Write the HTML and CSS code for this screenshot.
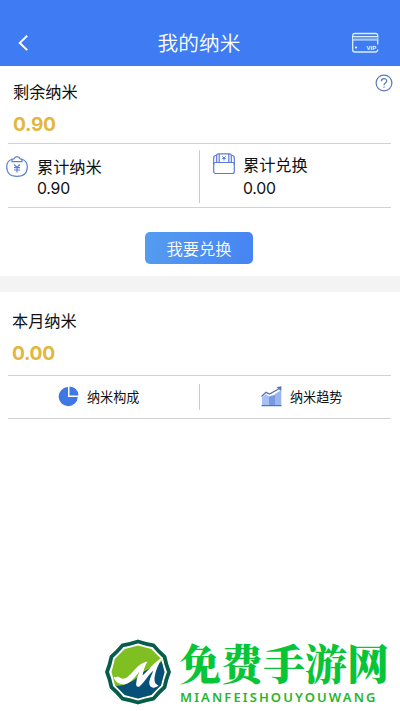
FILE: index.html
```html
<!DOCTYPE html>
<html lang="zh-CN">
<head>
<meta charset="utf-8">
<meta name="viewport" content="width=device-width, initial-scale=1">
<title>我的纳米</title>
<link rel="stylesheet" href="styles.css">
</head>
<body>
<header class="bar">
  <svg class="back" viewBox="0 0 12 18"><path d="M10.200 1.700 2.800 8.900l7.400 7.200" fill="none" stroke="#fff" stroke-width="2"/></svg>
  <h1 class="title">我的纳米</h1>
  <svg class="vip" viewBox="0 0 28 22"><path d="M17 20H4Q1.700 20 1.700 18V3.500Q1.700 1.500 4 1.500h20.500q2.200 0 2.200 2v9M26.700 17.500q0 2.500-2.500 2.500h-7.500" fill="none" stroke="#d9f0ff" stroke-width="1.300"/><path d="M2 4.500h24.500v3.500H2z" fill="#6d9fe8"/><path d="M2 4.500h24.500M2 8h24.500" stroke="#d9f0ff"/><circle cx="5" cy="15.500" r="1.100" fill="#fff"/><text x="15.500" y="18" class="vip-text">VIP</text></svg>
</header>
<main>
  <section class="balance">
    <div class="summary">
      <div><h2 class="label">剩余纳米</h2><p class="amount">0.90</p></div>
      <svg class="help" viewBox="0 0 18 18"><circle cx="9" cy="9" r="7.900" fill="none" stroke="#5879b8" stroke-width="1.200"/><path d="M6.300 7.200C6.300 3.700 11.700 3.700 11.700 7c0 2-2.700 2.100-2.700 4.200M9 12.500v1.300" fill="none" stroke="#5879b8" stroke-width="1.200"/></svg>
    </div>
    <div class="stats">
      <div class="stat">
        <svg class="stat-icon purse" viewBox="0 0 22 22"><g fill="none" stroke="#5b7fd0" stroke-width="1.200"><path d="M6 3.300C2.500 4.500.7 7.200.7 10.700c0 6.200 3.500 9.600 10.300 9.600s10.300-3.400 10.300-9.600c0-3.500-1.800-6.200-5.300-7.400"/><path d="M6 5.700V3.300l2-.5C9-.1 13-.1 14 2.800l2 .5v2.400Z"/><path d="m8 8.500 3 3 3-3M11 11.500v5M8 11.700h6M8 14h6"/></g></svg>
        <div><h3 class="label">累计纳米</h3><p class="value">0.90</p></div>
      </div>
      <div class="stat exchange">
        <svg class="stat-icon" viewBox="0 0 22 22"><g fill="none" stroke="#5b7bdc" stroke-width="1.200"><rect x=".7" y="9.500" width="20.600" height="11" rx="2"/><path d="M.7 11.500V5q0-2.500 2.300-2.500h1M21.300 11.500V5q0-2.500-2.300-2.500h-1M3.700 9.500V2.500Q3.700.8 5.500.8h11q1.800 0 1.800 1.700v7M6.200 1v8.500M15.800 1v8.500"/><path d="m9.300 3.300 1.700 1.700 1.700-1.700M11 5v2.700M9.300 5.500h3.400" stroke-width="1"/></g></svg>
        <div><h3 class="label">累计兑换</h3><p class="value">0.00</p></div>
      </div>
    </div>
    <button class="redeem">我要兑换</button>
  </section>
  <section class="month">
    <h2 class="label">本月纳米</h2><p class="amount">0.00</p>
    <nav class="links">
      <a class="link"><svg class="link-icon" viewBox="0 0 21 21"><path d="M10 1A9.600 9.600 0 1 0 19.800 11H10Z" fill="#3f78e6"/><path d="M11.500.4V9.400h9A9.200 9.200 0 0 0 11.500.4Z" fill="#3f78e6"/></svg>纳米构成</a>
      <a class="link trend"><svg class="link-icon" viewBox="0 0 21 21"><path d="M1 11.500 5 8.200l3 2v9H1z" fill="#a6bff5"/><path d="M8 10.500l6-1.700v10.400H8z" fill="#7799e2"/><path d="m14 8 6.300-4v15.200H14z" fill="#9bb5f2"/><path d="M.5 19.700h20M.5 10.500 5 6.300l3.500 1.800L18 2.800" fill="none" stroke="#5572b4" stroke-width="1.300"/><path d="m15.500 1.200 5-.9-.3 4.700Z" fill="#5572b4"/></svg>纳米趋势</a>
    </nav>
  </section>
</main>
<footer class="brand">
  <svg class="logo" viewBox="0 0 68 66">
    <defs><clipPath id="badge"><path d="m34 6.500 13.300 3.500 9.700 9.700L60.500 33 57 46.300 47.300 56 34 59.500 20.700 56 11 46.300 7.500 33 11 19.700 20.700 10Z"/></clipPath></defs>
    <path d="M34 2.500Q41.500 5 49.500 6.400 54.500 12.500 60.500 17.700 62 25.500 65 33 62 40.500 60.500 48.300 54.500 53.500 49.500 59.600 41.500 61 34 63.500 26.500 61 18.500 59.600 13.500 53.500 7.500 48.300 6 40.500 3 33 6 25.500 7.500 17.700 13.500 12.500 18.500 6.400 26.500 5 34 2.500Z" fill="#fff" stroke="#075c4c" stroke-width="3.800" stroke-linejoin="round"/>
    <g clip-path="url(#badge)"><path d="M0 0h68v66H0z" fill="#80bf22"/><path d="M8 47c14 1 24-6 31-14L63 20v46H8Z" fill="#075078"/></g>
    <path d="M9.500 38c3 0 5-1 7 1 2 1 4 1 7-1 5-4 7-8 12-12 3-2 5-3 8-3.500-3 5-4 9-5 14 7-6 12-14 20-18-4 6-7 13-8 20 0 4 0 6 4 8-3 3-8 3-9-1s2-9 4-14c-6 5-9 12-14 16-3 1-4-1-3-5 0-3 2-7 3-10-5 6-9 12-16 13-4 0-9-3-10-7.500Z" fill="#fff"/>
  </svg>
  <div class="brand-copy"><strong class="brand-name">免费手游网</strong><span class="brand-latin">MIANFEISHOUYOUWANG</span></div>
</footer>
</body>
</html>
```
FILE: styles.css
```css
* { box-sizing: border-box; }
body { margin: 0; width: 400px; height: 711px; overflow: hidden; display: flex; flex-direction: column; background: #fff; color: #111; font-family: "Noto Sans CJK SC", sans-serif; }
h1, h2, h3, p { margin: 0; font-weight: 400; }
svg { display: block; flex: none; overflow: visible; }
.bar { height: 66px; padding: 20px 21px 0 17px; display: flex; align-items: center; justify-content: space-between; background: #3f7bf2; color: #fff; }
.back { width: 12px; height: 18px; }
.title { font-size: 20.7px; line-height: 42px; padding-bottom: 3px; font-weight: 350; margin-left: 18px; }
.vip { width: 28px; height: 22px; }
.vip-text { font: bold 6px "Liberation Sans", sans-serif; fill: #e6f8ff; }
.balance { height: 210px; }
.summary { height: 77px; padding: 13px 7px 0 13px; display: flex; justify-content: space-between; }
.label { font-size: 16.2px; line-height: 24px; }
.amount { font: bold 19.2px/26px Inter, sans-serif; color: #e3b63e; margin-top: 8px; letter-spacing: -.3px; }
.help { width: 18px; height: 18px; margin-top: -5px; }
.stats { height: 65px; margin: 0 9px 0 8px; border: solid #d2d2d2; border-width: 1px 0; display: grid; grid-template-columns: 192px 1fr; }
.stat { display: flex; align-items: flex-start; gap: 9px; padding-top: 10px; margin-left: -2px; }
.stat-icon { width: 22px; height: 22px; }
.purse { margin-top: 2px; }
.value { font: 15.8px/20px Inter, sans-serif; letter-spacing: -.2px; margin-top: 1px; }
.exchange { margin: 6px 0 4px -1px; border-left: 1px solid #c9cbd2; padding: 2px 0 0 13px; gap: 8px; }
.exchange .value { margin-top: 3px; }
.exchange .stat-icon { margin-top: 1px; }
.redeem { display: block; width: 108px; height: 32px; margin: 24px 0 0 145px; padding: 0; border: 0; border-radius: 5px; background: linear-gradient(100deg, #559cf0, #4684f3); color: #fff; font: 350 16.3px/31px "Noto Sans CJK SC", sans-serif; }
.month { height: 159px; border-top: 16px solid #f3f3f3; padding-top: 16px; }
.month > .label, .month > .amount { margin-left: 12px; }
.links { height: 44px; margin: 9px 9px 0 8px; border: solid #d2d2d2; border-width: 1px 0; display: grid; grid-template-columns: 191px 1fr; align-items: center; }
.link { height: 26px; display: flex; align-items: center; gap: 8px; padding-left: 50px; font-size: 13.1px; line-height: 24px; padding-bottom: 1px; }
.trend { border-left: 1px solid #c9cbd2; padding-left: 61px; }
.link-icon { width: 21px; height: 21px; }
.brand { height: 72px; margin-top: auto; padding-left: 104px; display: flex; align-items: flex-start; gap: 7px; }
.logo { width: 68px; height: 66px; }
.brand-copy { display: flex; flex-direction: column; }
.brand-name { font: 900 42px/46px "Noto Serif CJK SC", "Noto Sans CJK SC", serif; color: #08c538; white-space: nowrap; }
.brand-latin { margin-top: 3px; padding-left: 1px; font: 600 13px/18px "Noto Sans", sans-serif; letter-spacing: 2.1px; color: #28b52b; white-space: nowrap; }
```
